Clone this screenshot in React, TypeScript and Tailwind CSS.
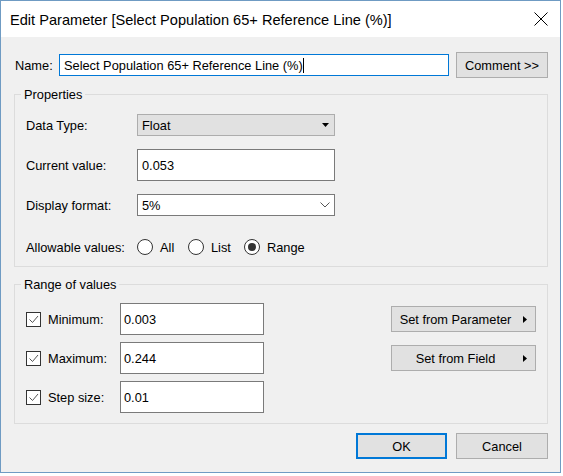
import React from "react";

function Radio({ checked }: { checked?: boolean }) {
  return (
    <span className="w-[16px] h-[16px] rounded-full border border-[#333333] bg-white flex items-center justify-center shrink-0">
      {checked ? <span className="w-[8px] h-[8px] rounded-full bg-[#333333]" /> : null}
    </span>
  );
}

function Check() {
  return (
    <span className="w-[15px] h-[15px] border border-[#333333] bg-white flex items-center justify-center shrink-0">
      <svg width="13" height="13" viewBox="0 0 13 13">
        <path d="M2.5 6.5 L5.5 9.5 L11 3" fill="none" stroke="#555555" strokeWidth="1" />
      </svg>
    </span>
  );
}

function RightArrow() {
  return (
    <svg width="4" height="7" viewBox="0 0 4 7" className="shrink-0">
      <path d="M0 0 L4 3.5 L0 7 Z" fill="#000" />
    </svg>
  );
}

function SetButton({ label }: { label: string }) {
  return (
    <div className="w-[145px] h-[26px] border border-[#adadad] bg-[#e1e1e1] flex items-center pr-[8px]">
      <span className="flex-1 text-center mr-[4px]">{label}</span>
      <RightArrow />
    </div>
  );
}

function Field({ value }: { value: string }) {
  return (
    <div className="w-[144px] h-[32px] border border-[#7a7a7a] bg-white flex items-center pl-[3px]">{value}</div>
  );
}

export default function App() {
  return (
    <div className="w-[563px] h-[476px] bg-white font-['Liberation_Sans',Arial,sans-serif] text-[12.8px] leading-[15px] text-black">
      <div className="w-[561px] h-[473px] border border-[#6f9bc3] bg-[#f0f0f0] flex flex-col">
        {/* Title bar */}
        <div className="h-[36px] bg-white flex items-center justify-between pl-[9px] pr-[12px] shrink-0">
          <span className="text-[14.6px] leading-[18px] pt-[2px]">
            Edit Parameter [Select Population 65+ Reference Line (%)]
          </span>
          <svg width="14" height="14" viewBox="0 0 14 14">
            <path d="M0.5 0.5 L13.5 13.5 M13.5 0.5 L0.5 13.5" stroke="#000" strokeWidth="1" />
          </svg>
        </div>

        <div className="flex flex-col pt-[15px]">
          {/* Name row */}
          <div className="flex items-center h-[26px] pl-[14px]">
            <span className="w-[44px]">Name:</span>
            <div className="w-[390px] h-[22px] border border-[#0078d7] bg-white flex items-center pl-[4px]">
              <span>Select Population 65+ Reference Line (%)</span>
              <span className="w-px h-[15px] bg-black" />
            </div>
            <div className="ml-[7px] w-[92px] h-[26px] border border-[#adadad] bg-[#e1e1e1] flex items-center justify-center">
              Comment &gt;&gt;
            </div>
          </div>

          {/* Properties */}
          <fieldset className="ml-[13px] mt-[9px] w-[534px] border border-[#dcdcdc]">
            <legend className="ml-[6px] px-[3px] leading-[15px]">Properties</legend>
            <div className="flex flex-col pt-[12px] pl-[11px] pb-[11px]">
              <div className="flex items-center h-[22px]">
                <span className="w-[111px]">Data Type:</span>
                <div className="w-[198px] h-[22px] border border-[#adadad] bg-[#e1e1e1] flex items-center justify-between pl-[4px] pr-[5px]">
                  <span>Float</span>
                  <svg width="7" height="4" viewBox="0 0 7 4">
                    <path d="M0 0 L7 0 L3.5 4 Z" fill="#000" />
                  </svg>
                </div>
              </div>
              <div className="flex items-center h-[32px] mt-[13px]">
                <span className="w-[111px]">Current value:</span>
                <div className="w-[198px] h-[32px] border border-[#7a7a7a] bg-white flex items-center pl-[4px]">0.053</div>
              </div>
              <div className="flex items-center h-[22px] mt-[13px]">
                <span className="w-[111px]">Display format:</span>
                <div className="w-[198px] h-[22px] border border-[#7a7a7a] bg-white flex items-center justify-between pl-[4px] pr-[4px]">
                  <span>5%</span>
                  <svg width="10" height="6" viewBox="0 0 10 6">
                    <path d="M0.5 0.5 L5 5 L9.5 0.5" fill="none" stroke="#555" strokeWidth="1" />
                  </svg>
                </div>
              </div>
              <div className="flex items-center h-[16px] mt-[23px]">
                <span className="w-[111px]">Allowable values:</span>
                <div className="w-[51px] flex items-center">
                  <Radio />
                  <span className="ml-[7px]">All</span>
                </div>
                <div className="w-[56px] flex items-center">
                  <Radio />
                  <span className="ml-[7px]">List</span>
                </div>
                <div className="flex items-center">
                  <Radio checked />
                  <span className="ml-[7px]">Range</span>
                </div>
              </div>
            </div>
          </fieldset>

          {/* Range of values */}
          <fieldset className="ml-[13px] mt-[10px] w-[534px] border border-[#dcdcdc]">
            <legend className="ml-[6px] px-[3px] leading-[15px]">Range of values</legend>
            <div className="flex flex-col gap-[7px] pt-[11px] pl-[11px] pr-[11px] pb-[10px]">
              <div className="flex items-center h-[32px]">
                <Check />
                <span className="ml-[7px] w-[72px]">Minimum:</span>
                <Field value="0.003" />
                <div className="ml-auto">
                  <SetButton label="Set from Parameter" />
                </div>
              </div>
              <div className="flex items-center h-[32px]">
                <Check />
                <span className="ml-[7px] w-[72px]">Maximum:</span>
                <Field value="0.244" />
                <div className="ml-auto">
                  <SetButton label="Set from Field" />
                </div>
              </div>
              <div className="flex items-center h-[32px]">
                <Check />
                <span className="ml-[7px] w-[72px]">Step size:</span>
                <Field value="0.01" />
              </div>
            </div>
          </fieldset>

          {/* Buttons */}
          <div className="flex justify-end gap-[9px] mt-[9px] pr-[12px]">
            <div className="w-[91px] h-[26px] border-2 border-[#0078d7] bg-[#e1e1e1] flex items-center justify-center">OK</div>
            <div className="w-[92px] h-[26px] border border-[#adadad] bg-[#e1e1e1] flex items-center justify-center">Cancel</div>
          </div>
        </div>
      </div>
    </div>
  );
}
